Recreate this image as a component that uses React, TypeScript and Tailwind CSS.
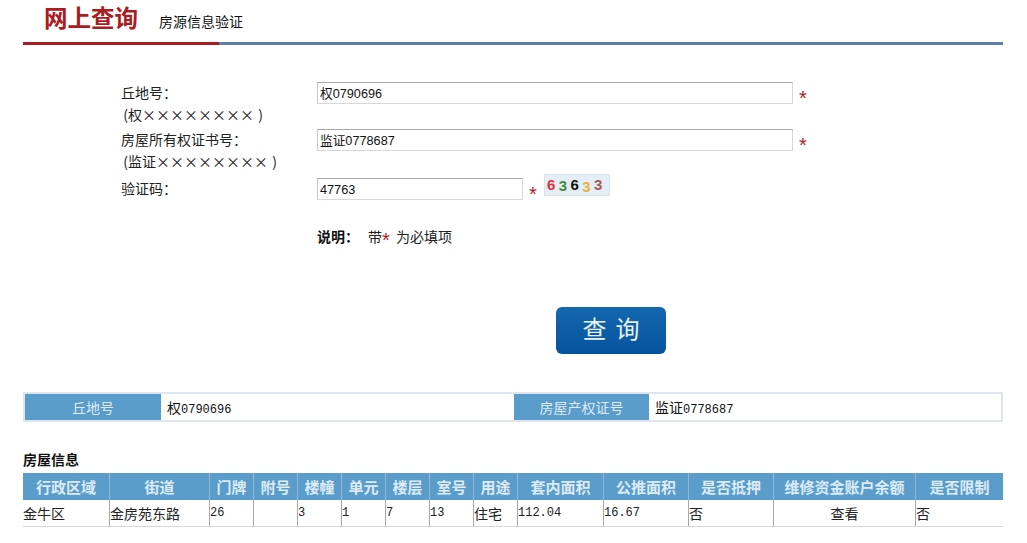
import React from "react";

const cjk = "font-['Noto_Sans_CJK_SC',sans-serif]";
const inputFont = "font-['Liberation_Sans','Noto_Sans_CJK_SC',sans-serif]";
const monoFont = "font-['Liberation_Mono','Noto_Sans_CJK_SC',monospace]";

const columns = [
  { title: "行政区域", value: "金牛区", width: "w-[86px]" },
  { title: "街道", value: "金房苑东路", width: "w-[100px]" },
  { title: "门牌", value: "26", width: "w-[44px]" },
  { title: "附号", value: "", width: "w-[44px]" },
  { title: "楼幢", value: "3", width: "w-[44px]" },
  { title: "单元", value: "1", width: "w-[44px]" },
  { title: "楼层", value: "7", width: "w-[44px]" },
  { title: "室号", value: "13", width: "w-[44px]" },
  { title: "用途", value: "住宅", width: "w-[44px]" },
  { title: "套内面积", value: "112.04", width: "w-[86px]" },
  { title: "公推面积", value: "16.67", width: "w-[85px]" },
  { title: "是否抵押", value: "否", width: "w-[85px]" },
  { title: "维修资金账户余额", value: "查看", width: "w-[142px]", center: true },
  { title: "是否限制", value: "否", width: "w-[88px]" },
];

const Star = () => (
  <span className="inline-block w-[8px] h-[12px] overflow-visible text-[#b01c2e] text-[20px] leading-[20px] font-['Liberation_Sans',sans-serif]">
    *
  </span>
);

const FieldInput = ({ value, width }: { value: string; width: string }) => (
  <div
    className={`${width} ${inputFont} h-[22px] border border-[#d8d8d8] border-t-[#a8a8a8] border-l-[#c8c8c8] pl-[2px] text-[12.7px] leading-[22px] text-[#111]`}
  >
    {value}
  </div>
);

const Captcha = () => (
  <div className="flex w-[66px] h-[22px] items-start gap-[3.4px] bg-[#e4eef5] border border-[#dbe3ea] pl-[2px] pt-[2px] text-[15px] leading-[15px] font-bold font-['Liberation_Sans',sans-serif]">
    <span className="text-[#d9343f]">6</span>
    <span className="text-[#3d8b45] mt-[1px]">3</span>
    <span className="text-[#111]">6</span>
    <span className="text-[#e8b23e] mt-[2px]">3</span>
    <span className="text-[#a85a5a]">3</span>
  </div>
);

export default function App() {
  return (
    <div className={`${cjk} w-[1027px] h-[543px] bg-white text-[14px] text-[#222] overflow-hidden`}>
      {/* 标题 */}
      <div className="mx-[23px] w-[980px]">
        <div className="flex h-[42px] items-start pl-[21px]">
          <span className="text-[23.5px] leading-[38px] -mt-[2px] font-bold text-[#a81c22]">网上查询</span>
          <span className="ml-[21px] mt-[11px] text-[14px] leading-[20px] text-[#111]">房源信息验证</span>
        </div>
        <div className="flex h-[3px] bg-[#5d7fb0]">
          <div className="w-[196px] bg-[#a81c22]" />
        </div>
      </div>

      {/* 表单 */}
      <div className="ml-[121px] mt-[37px]">
        <div className="flex h-[47px]">
          <div className="w-[196px] leading-[22px] -mt-[1px]">
            <div>丘地号：</div>
            <div>
              <span className="inline-block w-[7px] text-right">(</span>权××××××××<span className="inline-block w-[9px] text-right">)</span>
            </div>
          </div>
          <FieldInput value="权0790696" width="w-[476px]" />
          <span className="ml-[6px] mt-[6px]"><Star /></span>
        </div>
        <div className="flex h-[49px]">
          <div className="w-[196px] leading-[22px] -mt-[1px]">
            <div>房屋所有权证书号：</div>
            <div>
              <span className="inline-block w-[7px] text-right">(</span>监证××××××××<span className="inline-block w-[9px] text-right">)</span>
            </div>
          </div>
          <FieldInput value="监证0778687" width="w-[476px]" />
          <span className="ml-[6px] mt-[6px]"><Star /></span>
        </div>
        <div className="flex h-[22px]">
          <div className="w-[196px] leading-[22px] -mt-[1px]">验证码：</div>
          <FieldInput value="47763" width="w-[206px]" />
          <span className="ml-[6px] mt-[6px]"><Star /></span>
          <div className="ml-[7px] -mt-[4px]"><Captcha /></div>
        </div>
        <div className="mt-[25px] ml-[196px] flex h-[22px] items-center leading-[22px]">
          <span className="font-bold text-[#111] w-[51px]">说明：</span>
          <span>带</span>
          <Star />
          <span className="ml-[6px]">为必填项</span>
        </div>
      </div>

      {/* 查询按钮 */}
      <div className="mt-[60px] ml-[556px]">
        <button className="flex justify-center gap-[9px] w-[110px] h-[47px] rounded-[6px] bg-gradient-to-b from-[#1467ae] to-[#05539f] text-[#e8f2fa] text-[24px] leading-[42px]">
          <span>查</span>
          <span>询</span>
        </button>
      </div>

      {/* 查询结果 */}
      <div className="mx-[23px] mt-[38px] w-[980px] h-[30px] flex border-2 border-[#dfe5ef]">
        <div className="w-[136px] bg-[#5a9dcb] text-[#dfeaf4] text-center leading-[26px]">丘地号</div>
        <div className="w-[353px] pl-[6px] leading-[26px] text-[#111]">
          权<span className={`${monoFont} text-[12px]`}>0790696</span>
        </div>
        <div className="w-[135px] bg-[#5a9dcb] text-[#dfeaf4] text-center leading-[26px]">房屋产权证号</div>
        <div className="flex-1 pl-[6px] leading-[26px] text-[#111]">
          监证<span className={`${monoFont} text-[12px]`}>0778687</span>
        </div>
      </div>

      <div className="mx-[23px] mt-[26px] h-[25px] leading-[22px] font-bold text-[#111]">房屋信息</div>

      <div className="mx-[23px] w-[980px]">
        <div className="flex h-[27px] bg-[#5a9dcb]">
          {columns.map((c) => (
            <div
              key={c.title}
              className={`${c.width} border-l border-[#8fb8d6] first:border-l-0 text-center text-[15px] leading-[27px] font-bold text-[#dcebf5] whitespace-nowrap`}
            >
              {c.title}
            </div>
          ))}
        </div>
        <div className="flex h-[27px] border-b border-[#d5d9de]">
          {columns.map((c) => (
            <div
              key={c.title}
              className={`${c.width} border-l border-[#a8a8a8] first:border-l-0 leading-[27px] text-[#222] whitespace-nowrap ${c.center ? "text-center" : ""} ${/^[\d.]+$/.test(c.value) ? `${monoFont} text-[12px]` : ""}`}
            >
              {c.value}
            </div>
          ))}
        </div>
      </div>
    </div>
  );
}
